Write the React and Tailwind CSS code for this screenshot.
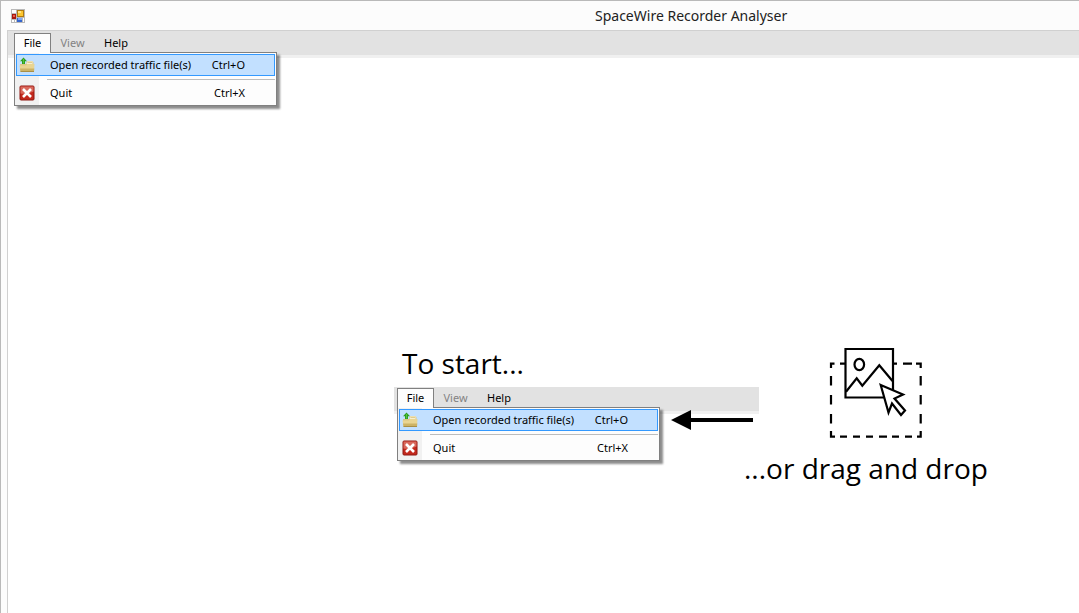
import React from "react";

function AppIcon() {
  return (
    <svg width="14" height="14" viewBox="0 0 14 14" shapeRendering="crispEdges" aria-hidden="true">
      <rect width="14" height="14" fill="#b9b9b9" />
      <rect x="1" y="1" width="4" height="3" fill="#fff" />
      <rect x="1" y="11" width="2" height="2" fill="#fff" />
      <rect x="4" y="11" width="1" height="2" fill="#fff" />
      <rect x="12" y="9" width="1" height="4" fill="#fff" />
      <rect x="1" y="5" width="4" height="5" fill="#a8170f" />
      <rect x="2" y="6" width="2" height="2" fill="#e8604c" />
      <rect x="6" y="1" width="7" height="7" fill="#b07a10" />
      <rect x="7" y="2" width="5" height="5" fill="#fcc62f" />
      <rect x="7" y="2" width="3" height="2" fill="#ffe486" />
      <rect x="6" y="9" width="5" height="4" fill="#3465cf" />
      <rect x="7" y="9" width="4" height="2" fill="#7fa9f5" />
    </svg>
  );
}

function FolderIcon() {
  return (
    <svg width="16" height="16" viewBox="0 0 16 16" aria-hidden="true">
      <path d="M1 7h6l1-3h5.500l1 1.500V13H1z" fill="#dcc684" />
      <path d="M8.500 4h5v3H7.500z" fill="#f7efcf" />
      <path d="M8.500 5.200h4.500" stroke="#cdb05a" strokeWidth=".8" />
      <path d="M.5 8.500H7l1-1.500h7.500L15 14.500H1.500z" fill="#e9d592" />
      <path d="M1 11.500h14.300L15 14.500H1.500z" fill="#cdb365" />
      <path d="M1.500 14.500h13.500" stroke="#a98f45" strokeWidth="1" />
      <path d="M4.500 .5L1 4.200h2v2.800h3V4.200h2z" fill="#2f9e1f" />
      <path d="M4.500 2V6.500" stroke="#54c63b" strokeWidth="1" />
    </svg>
  );
}

function QuitIcon() {
  return (
    <svg width="16" height="16" viewBox="0 0 16 16" aria-hidden="true">
      <rect x="1" y="1" width="14" height="14" rx="1" fill="#c3281c" stroke="#8e1711" />
      <path d="M1.500 1.500h13v5q-6 3-13 2z" fill="#d8695c" />
      <path d="M4 4l8 8M12 4l-8 8" stroke="#fff" strokeWidth="2.600" />
    </svg>
  );
}

function MenuItem({ icon, label, shortcut, selected }) {
  return (
    <button
      role="menuitem"
      className={
        "flex h-[22px] w-full items-center border text-left " +
        (selected ? "border-[#3399ff] bg-[#c2e0ff]" : "border-transparent")
      }
    >
      <span className="w-[33px] pl-0.5">{icon}</span>
      <span className="grow">{label}</span>
      <span className="pr-[29px]">{shortcut}</span>
    </button>
  );
}

function MenuBar({ className }) {
  return (
    <nav
      className={
        "h-[27px] border-b-[3px] border-[#f0f0f0] bg-[#e2e2e2] font-['Noto_Sans',sans-serif] text-[11px] leading-4 text-black " +
        className
      }
    >
      <div className="relative flex">
        <button className="relative z-10 h-5 w-[37px] border border-b-0 border-[#808080] bg-[#fdfdfd] pb-0.5">File</button>
        <button className="h-5 w-[43px] text-[#838383]">View</button>
        <button className="h-5 w-11">Help</button>
        <div
          role="menu"
          className="absolute top-[19px] left-0 w-[263px] border border-[#808080] bg-[#fdfdfd] bg-linear-to-r from-[#f1f1f1] from-[24px] to-[#fdfdfd] to-[24px] p-px shadow-[3px_3px_2px_rgba(0,0,0,0.45)]"
        >
          <MenuItem icon={<FolderIcon />} label="Open recorded traffic file(s)" shortcut="Ctrl+O" selected />
          <hr className="mt-[3px] mb-0.5 ml-[31px] border-[#bdbdbd]" />
          <MenuItem icon={<QuitIcon />} label="Quit" shortcut="Ctrl+X" />
        </div>
      </div>
    </nav>
  );
}

function ArrowLeft() {
  return (
    <svg width="82" height="20" viewBox="0 0 82 20" aria-hidden="true">
      <path d="M0 10L20 0v8h62v4H20v8z" fill="#000" />
    </svg>
  );
}

function DragPicture() {
  return (
    <svg width="94" height="92" viewBox="0 0 94 92" fill="none" stroke="#000" strokeWidth="2.200" aria-hidden="true">
      <path d="M2 21V16.700H5.500M11 16.700h5M64 16.700h4M74 16.700h9M87 16.700h4.700V21M2 29v9.500M2 48v9.500M2 67v9.500M2 84v5.700H6M91.700 29v9.500M91.700 48v9.500M91.700 67v9.500M91.700 84v5.700H88M11 89.700h7M24 89.700h7M37 89.700h7M50 89.700h8M63 89.700h7M76 89.700h7" />
      <path d="M16.500 2h47.500v48.500H16.500z" />
      <ellipse cx="30.300" cy="17.500" rx="4.800" ry="5.600" />
      <path d="M17 44.700L27.700 31.300l5.600 7.400L50.300 18.300 63.500 34" />
      <path d="M51.700 38L74 47.500l-8.500 4L76 63.500 72 68 63 56.500l-3.500 9z" fill="#fff" />
    </svg>
  );
}

export default function App() {
  return (
    <div className="flex min-h-screen flex-col overflow-hidden border-t border-l border-[#b9b9b9] bg-[#fcfcfc] pl-1.5 font-['Open_Sans',sans-serif] text-black">
      <header className="flex h-[29px] items-center pl-1">
        <AppIcon />
        <h1 className="pl-[570px] font-['Noto_Sans',sans-serif] text-sm whitespace-nowrap text-[#222]">
          SpaceWire Recorder Analyser
        </h1>
      </header>
      <div className="grow border-t border-l border-[#d0d0d0] bg-white">
        <MenuBar className="pt-0.5 pl-1.5" />
        <main className="flex pt-[288px] pl-[386px]">
          <section className="w-[350px] shrink-0">
            <h2 className="h-[41px] pl-2 text-[28px] leading-[34px]">To start...</h2>
            <div className="relative w-[365px]">
              <MenuBar className="pt-px pl-[3px]" />
              <div className="absolute top-[23px] right-1.5">
                <ArrowLeft />
              </div>
            </div>
          </section>
          <section className="shrink-0">
            <div className="pt-px pl-[85px]">
              <DragPicture />
            </div>
            <p className="pt-[11px] text-[28px] leading-9 whitespace-nowrap">...or drag and drop</p>
          </section>
        </main>
      </div>
    </div>
  );
}
